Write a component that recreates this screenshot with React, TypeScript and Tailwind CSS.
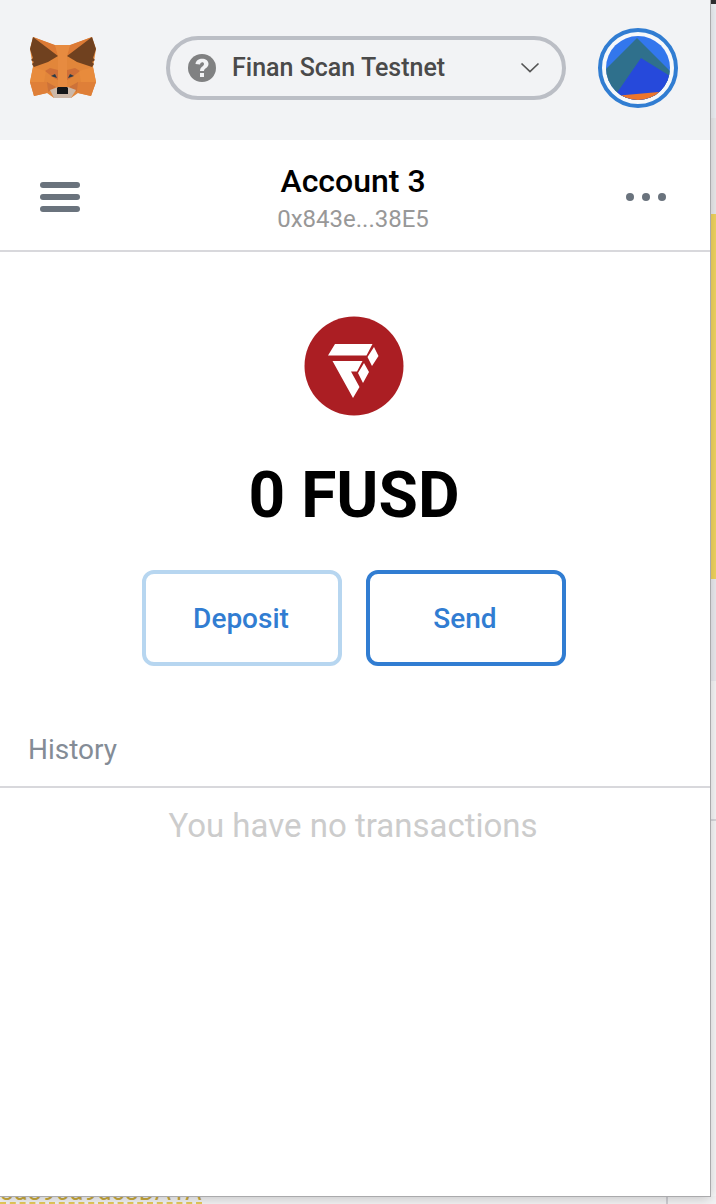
function Fox() {
  return (
    <svg viewBox="0 0 90 80" className="h-[80px] w-[90px]" aria-hidden="true">
      <path d="M13 9 L34 17 H51 L72 9 L76 21 L73 39 L76 54 L71 68 L58 65 L51 70 H34 L27 65 L14 68 L10 54 L13 39 L10 21Z" fill="#e2863a" />
      <path d="M13 9 L35 17 L38 28Z M72 9 L50 17 L47 28Z" fill="#dc7a35" />
      <path d="M35 17 H50 L47 28 V59 H38 V28Z" fill="#e78b40" />
      <path d="M13 39 L26 43 L24 54 H10Z M73 39 L59 43 L61 54 H76Z" fill="#e88b3c" />
      <path d="M10 54 H28 L27 65 L14 68Z M76 54 H57 L58 65 L71 68Z" fill="#df7f38" />
      <path d="M27 54 L36 59 L28 64Z M58 54 L49 59 L57 64Z" fill="#cd7239" />
      <path d="M25 43 L30 40 L38 42 V52 L34 50Z M60 43 L55 40 L47 42 V52 L51 50Z" fill="#cf6f37" />
      <path d="M13 9 L38 28 L28 34 L14 39 L12 36 L14 34 L11 32 L13 30 L10 21Z M72 9 L47 28 L57 34 L72 39 L74 36 L72 34 L75 32 L73 30 L76 21Z" fill="#70411f" />
      <path d="M30 62 L38 59 H48 L56 62 L51 70 H34Z" fill="#ccb8a8" />
      <path d="M31 48 L35 46 L37 50Z M54 48 L50 46 L48 50Z" fill="#293c4b" />
      <path d="M38 59 H47 L48 60 V66 H37 V60Z" fill="#151719" />
    </svg>
  );
}

function Avatar() {
  return (
    <svg viewBox="0 0 64 64" className="size-[64px] rounded-full" aria-hidden="true">
      <rect width="64" height="64" fill="#3377ed" />
      <path d="M31 2 L64 35 V64 H0 V33Z" fill="#2f708c" />
      <path d="M35 22 L64 40 V64 H6Z" fill="#2649db" />
      <path d="M8 60 L64 55 V64 H8Z" fill="#ed752b" />
    </svg>
  );
}

function TokenLogo() {
  return (
    <svg viewBox="0 0 100 100" className="size-[100px]" role="img" aria-label="FUSD">
      <circle cx="50" cy="50" r="49.5" fill="#ab1e23" />
      <path fill="#fff" d="M31 28 H68.5 L62.5 39.500 H24Z M70 31 L74.500 40 L68 50 L63.500 41Z M28.500 45 H58.500 L53 55.500 H47 L55.500 71 L49 82Z M60 47 L65 56 L59 67 L54 57Z" />
    </svg>
  );
}

export default function App() {
  return (
    <div className="flex min-h-screen flex-col overflow-hidden bg-[#f3f3f4] font-['Roboto',sans-serif]">
      <div className="flex flex-1">
        <main className="z-10 flex min-w-0 flex-1 flex-col bg-white shadow-[0_0_0_1px_#aaaaac,0_2px_12px_#00000038]">
          <header className="flex h-[140px] items-start justify-between bg-[#f2f3f5] pr-8 pl-5">
            <a href="#home" aria-label="Home" className="mt-7">
              <Fox />
            </a>
            <button
              type="button"
              className="mt-9 mr-8 ml-14 flex h-16 min-w-0 flex-1 items-center rounded-full border-4 border-[#bbbec5] pr-[22px] pl-[18px] text-left"
            >
              <svg viewBox="0 0 28 28" className="mr-4 size-[28px] shrink-0" aria-hidden="true">
                <circle cx="14" cy="14" r="14" fill="#808182" />
                <path d="M7.500 10 C8 3 20.500 3 20.500 10 C20.500 14 16 14 16 17 H12 C12 12.500 16 12.500 16 10 C16 7.500 12.500 7.500 12 10.500Z M12 19 H16 V23 H12Z" fill="#f2f3f5" />
              </svg>
              <span className="flex-1 truncate text-[25px] leading-8 font-medium text-[#4a4a4a]">Finan Scan Testnet</span>
              <svg viewBox="0 0 20 12" className="h-3 w-5" fill="none" stroke="#555" strokeWidth="1.700" aria-hidden="true">
                <path d="M1.500 1.500 L10 9.500 L18.500 1.500" />
              </svg>
            </button>
            <button
              type="button"
              aria-label="Accounts"
              className="mt-7 flex size-20 items-center justify-center rounded-full border-4 border-[#317dd2] bg-[#f6f8fa]"
            >
              <Avatar />
            </button>
          </header>

          <section className="flex h-[112px] items-center justify-between border-b-2 border-[#d8d8dc] px-10 pt-1">
            <button type="button" aria-label="Menu" className="flex w-10 flex-col gap-1.5">
              <span className="h-1.5 rounded-full bg-[#6a737d]" />
              <span className="h-1.5 rounded-full bg-[#6a737d]" />
              <span className="h-1.5 rounded-full bg-[#6a737d]" />
            </button>
            <button type="button" className="flex flex-col items-center pt-1">
              <span className="text-[32px] leading-10 font-medium text-black">Account 3</span>
              <span className="text-[24px] leading-9 text-[#989898]">0x843e...38E5</span>
            </button>
            <button type="button" aria-label="Account options" className="mr-1 flex gap-2">
              <span className="size-2 rounded-full bg-[#6a737d]" />
              <span className="size-2 rounded-full bg-[#6a737d]" />
              <span className="size-2 rounded-full bg-[#6a737d]" />
            </button>
          </section>

          <section className="flex flex-col items-center pt-16 pr-0.5">
            <TokenLogo />
            <h1 className="mt-[42px] text-[64px] leading-[76px] font-bold text-black">0 FUSD</h1>
            <div className="mt-9 flex gap-6">
              <button type="button" className="h-24 w-[200px] rounded-xl border-4 border-[#b7d6f0] pt-0.5 pr-0.5 text-[28px] font-medium text-[#317dd2]">
                Deposit
              </button>
              <button type="button" className="h-24 w-[200px] rounded-xl border-4 border-[#317dd2] pt-0.5 pr-0.5 text-[28px] font-medium text-[#317dd2]">
                Send
              </button>
            </div>
          </section>

          <section className="mt-16">
            <h2 className="border-b-2 border-[#d8d8dc] px-7 pb-4 text-[28px] leading-10 text-[#848c96]">History</h2>
            <p className="pt-[18px] pr-1 text-center text-[33px] leading-10 text-[#cccccc]">You have no transactions</p>
          </section>
        </main>

        <aside className="flex w-1.5 flex-col bg-[#f7f7f8]" aria-hidden="true">
          <div className="h-1 bg-[#303032]" />
          <div className="h-[114px] bg-[#eff2f6]" />
          <div className="h-24 bg-[#ebebed]" />
          <div className="h-[365px] bg-[#f2d55f]" />
          <div className="h-[102px] bg-[#ebebf0]" />
          <div className="h-[140px] border-b-2 border-[#d8d8dc]" />
        </aside>
      </div>
      <footer className="flex h-2 items-end justify-between pr-12">
        <a href="#address" className="border-b-2 border-dashed border-[#e6ca5a] text-[25px] leading-5 text-[#c9aa3e]">
          3a890a9dc8DA1A
        </a>
        <span className="h-2 w-0.5 bg-[#cfcfd4]" />
      </footer>
    </div>
  );
}
